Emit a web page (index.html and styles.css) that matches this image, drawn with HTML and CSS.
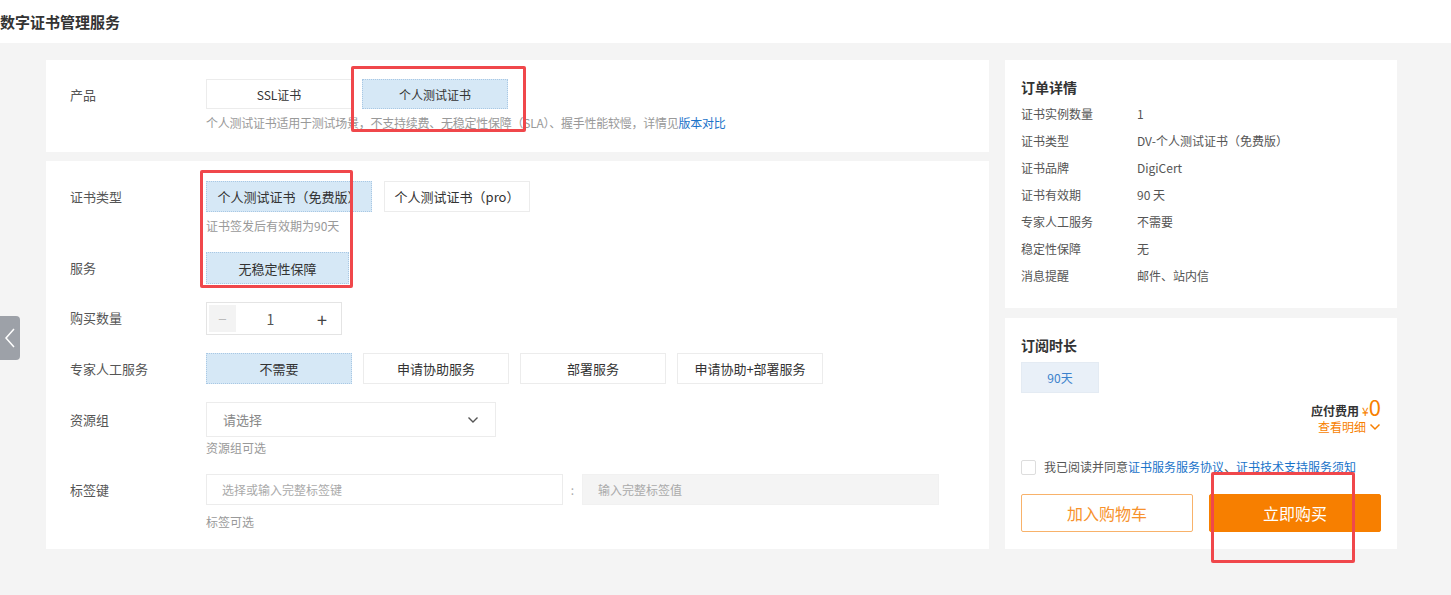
FILE: index.html
```html
<!DOCTYPE html>
<html lang="zh-CN">
<head>
  <meta charset="UTF-8">
  <meta name="viewport" content="width=device-width, initial-scale=1.0">
  <title>数字证书管理服务</title>
  <link rel="stylesheet" href="styles.css">
</head>
<body>
  <div class="topbar">
    <h1>数字证书管理服务</h1>
  </div>

  <div class="main">
    <div class="left-col">
      <div class="panel panel-product">
        <div class="row">
          <div class="label">产品</div>
          <div class="control">
            <div class="opts">
              <span class="opt">SSL证书</span>
              <span class="opt active">个人测试证书</span>
            </div>
            <div class="hint">个人测试证书适用于测试场景，不支持续费、无稳定性保障（SLA）、握手性能较慢，详情见<a href="#">版本对比</a></div>
          </div>
        </div>
      </div>

      <div class="panel panel-form">
        <div class="row">
          <div class="label">证书类型</div>
          <div class="control">
            <div class="opts">
              <span class="opt big wide active">个人测试证书（免费版）</span>
              <span class="opt big">个人测试证书（pro）</span>
            </div>
            <div class="hint">证书签发后有效期为90天</div>
          </div>
        </div>

        <div class="row">
          <div class="label tall">服务</div>
          <div class="control">
            <div class="opts">
              <span class="opt big tall active">无稳定性保障</span>
            </div>
          </div>
        </div>

        <div class="row">
          <div class="label tall">购买数量</div>
          <div class="control">
            <div class="counter">
              <span class="minus">−</span>
              <span class="num">1</span>
              <span class="plus">+</span>
            </div>
          </div>
        </div>

        <div class="row">
          <div class="label">专家人工服务</div>
          <div class="control">
            <div class="opts">
              <span class="opt big active">不需要</span>
              <span class="opt big">申请协助服务</span>
              <span class="opt big">部署服务</span>
              <span class="opt big">申请协助+部署服务</span>
            </div>
          </div>
        </div>

        <div class="row">
          <div class="label select-label">资源组</div>
          <div class="control">
            <div class="select">
              <span>请选择</span>
              <svg width="14" height="14" viewBox="0 0 14 14"><path d="M2.5 4.5 7 9l4.5-4.5" fill="none" stroke="#555" stroke-width="1.4"/></svg>
            </div>
            <div class="hint hint-select">资源组可选</div>
          </div>
        </div>

        <div class="row last">
          <div class="label">标签键</div>
          <div class="control">
            <div class="tags">
              <input class="tag-key" type="text" placeholder="选择或输入完整标签键">
              <span class="colon">:</span>
              <input class="tag-val" type="text" placeholder="输入完整标签值" disabled>
            </div>
            <div class="hint hint-tag">标签可选</div>
          </div>
        </div>
      </div>
    </div>

    <div class="right-col">
      <div class="panel side order">
        <h3>订单详情</h3>
        <dl>
          <div class="line"><dt>证书实例数量</dt><dd>1</dd></div>
          <div class="line"><dt>证书类型</dt><dd>DV-个人测试证书（免费版）</dd></div>
          <div class="line"><dt>证书品牌</dt><dd>DigiCert</dd></div>
          <div class="line"><dt>证书有效期</dt><dd>90 天</dd></div>
          <div class="line"><dt>专家人工服务</dt><dd>不需要</dd></div>
          <div class="line"><dt>稳定性保障</dt><dd>无</dd></div>
          <div class="line"><dt>消息提醒</dt><dd>邮件、站内信</dd></div>
        </dl>
      </div>

      <div class="panel side buy">
        <h3>订阅时长</h3>
        <span class="duration">90天</span>
        <div class="price">应付费用 <span class="yen">¥</span><span class="amount">0</span></div>
        <div class="detail">查看明细
          <svg width="12" height="12" viewBox="0 0 12 12"><path d="M1.5 3.5 6 8l4.5-4.5" fill="none" stroke="#f77f00" stroke-width="1.5"/></svg>
        </div>
        <label class="agree"><span class="box"></span>我已阅读并同意<a href="#">证书服务服务协议</a>、<a href="#">证书技术支持服务须知</a></label>
        <div class="actions">
          <button class="btn-cart">加入购物车</button>
          <button class="btn-buy">立即购买</button>
        </div>
      </div>
    </div>
  </div>

  <div class="back-arrow">
    <svg width="12" height="22" viewBox="0 0 12 22"><path d="M10 2 2 11l8 9" fill="none" stroke="#fff" stroke-width="1.5"/></svg>
  </div>

  <!-- annotation boxes from the screenshot -->
  <div class="mark mark-product"></div>
  <div class="mark mark-type"></div>
  <div class="mark mark-buy"></div>
</body>
</html>
```

FILE: styles.css
```css
* { box-sizing: border-box; }
body { margin: 0; background: #f4f4f4; font-family: "Noto Sans CJK SC", "Noto Sans", sans-serif; color: #333; min-height: 595px; position: relative; overflow: hidden; }
a { color: #1a73c9; text-decoration: none; }

.topbar { background: #fff; height: 43px; display: flex; align-items: center; }
.topbar h1 { margin: 0; font-size: 15px; font-weight: bold; color: #333; line-height: 20px; }

.main { display: flex; gap: 16px; padding: 17px 0 0 46px; }
.left-col { width: 943px; display: flex; flex-direction: column; gap: 9px; }
.right-col { width: 392px; display: flex; flex-direction: column; gap: 10px; }

.panel { background: #fff; }
.panel-product { padding: 19px 24px 16px; height: 92px; }
.panel-form { padding: 20px 24px 19px; height: 388px; }

.row { display: flex; margin-bottom: 18px; }
.row.last { margin-bottom: 0; }
.label { width: 136px; flex: none; font-size: 13px; color: #555; line-height: 31px; }
.label.tall { line-height: 32px; }
.label.select-label { line-height: 35px; }
.control { flex: 1; }

.opts { display: flex; gap: 11px; }
.panel-product .opts { gap: 10px; }
.opt { display: inline-flex; align-items: center; justify-content: center; width: 146px; height: 30px; border: 1px solid #ececec; font-size: 12px; color: #333; background: #fff; }
.opt.big { height: 31px; font-size: 13px; padding: 0 6px; }
.opt.wide { width: 166px; margin-right: 1px; }
.opt.tall { height: 32px; width: 143px; }
.opt.active { background: #d6e8f6; border: 1px dotted #a9c8e4; }

.hint { font-size: 12px; color: #999; line-height: 16px; margin-top: 6px; }
.panel-product .hint { letter-spacing: -0.25px; }
.hint-select { margin-top: 3px; }
.hint-tag { margin-top: 9px; }

.counter { display: flex; align-items: center; width: 136px; height: 33px; border: 1px solid #e4e4e4; padding: 2px; }
.counter span { display: flex; align-items: center; justify-content: center; height: 27px; font-size: 15px; color: #555; }
.counter .minus { width: 27px; background: #f3f3f3; color: #bbb; }
.counter .num { flex: 1; font-size: 14px; }
.counter .plus { width: 34px; font-size: 18px; color: #444; }

.select { display: flex; align-items: center; justify-content: space-between; width: 290px; height: 35px; border: 1px solid #ececec; padding: 0 15px 0 16px; font-size: 13px; color: #888; }

.tags { display: flex; align-items: center; }
.tags input { height: 31px; font-family: inherit; font-size: 12px; padding: 0 15px; outline: none; }
.tags input::placeholder { color: #aaa; }
.tag-key { width: 357px; border: 1px solid #ececec; background: #fff; }
.tag-val { width: 357px; border: 1px solid #f1f1f1; background: #f4f4f4; }
.colon { width: 19px; text-align: center; color: #aaa; font-size: 12px; }

.side { padding: 17px 16px 19px; }
.side h3 { margin: 0; font-size: 14px; font-weight: bold; color: #333; line-height: 20px; }
.order dl { margin: 3px 0 0; }
.line { display: flex; height: 27px; align-items: center; font-size: 12px; color: #555; }
.line dt { width: 116px; }
.line dd { margin: 0; }

.buy { padding-bottom: 17px; }
.duration { display: flex; align-items: center; justify-content: center; width: 78px; height: 31px; margin-top: 7px; background: #e9f0f8; border: 1px solid #e4ebf3; color: #3b82cc; font-size: 12px; }
.price { display: flex; justify-content: flex-end; align-items: baseline; gap: 3px; height: 22px; margin-top: 2px; font-size: 12px; color: #333; font-weight: bold; }
.price .yen { color: #f77f00; font-weight: normal; font-size: 12px; margin-right: -3px; }
.price .amount { color: #f77f00; font-weight: normal; font-size: 22px; line-height: 22px; }
.detail { display: flex; justify-content: flex-end; align-items: center; gap: 3px; color: #f77f00; font-size: 12px; line-height: 16px; margin-top: 2px; }
.agree { display: flex; align-items: center; font-size: 12px; color: #555; margin-top: 24px; line-height: 16px; }
.agree .box { width: 15px; height: 15px; border: 1px solid #ddd; border-radius: 2px; margin-right: 8px; background: #fff; }
.actions { display: flex; gap: 16px; margin-top: 19px; }
.actions button { width: 172px; height: 38px; font-family: inherit; font-size: 16px; border-radius: 2px; cursor: pointer; }
.btn-cart { background: #fff; border: 1px solid #f8b26a; color: #f7922c; }
.btn-buy { background: #f77f00; border: 1px solid #f77f00; color: #fff; }

.back-arrow { position: absolute; left: 0; top: 316px; width: 20px; height: 44px; background: #9da1a8; border-radius: 0 4px 4px 0; display: flex; align-items: center; justify-content: center; }

.mark { position: absolute; border: 3px solid #f0474b; border-radius: 2px; pointer-events: none; }
.mark-product { left: 351px; top: 66px; width: 175px; height: 66px; }
.mark-type { left: 200px; top: 170px; width: 153px; height: 118px; }
.mark-buy { left: 1211px; top: 472px; width: 144px; height: 91px; }
```
